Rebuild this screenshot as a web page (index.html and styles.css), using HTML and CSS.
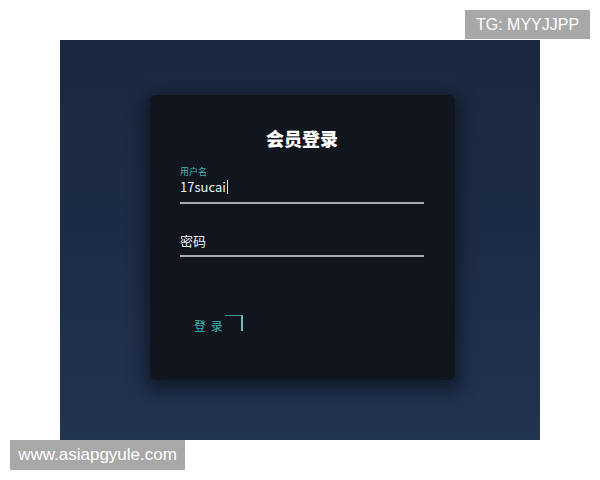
FILE: index.html
```html
<!DOCTYPE html>
<html lang="zh">
<head>
<meta charset="utf-8">
<link rel="stylesheet" href="styles.css">
</head>
<body>
<div class="page">
  <div class="panel">
    <div class="card">
      <h1 class="title">会员登录</h1>
      <div class="field">
        <div class="label">用户名</div>
        <div class="value">17sucai<span class="caret"></span></div>
        <div class="line"></div>
      </div>
      <div class="field field-pw">
        <div class="value">密码</div>
        <div class="line"></div>
      </div>
      <div class="btn-wrap">
        <span class="btn">登 录</span>
        <span class="corner"></span>
      </div>
    </div>
  </div>
</div>
<div class="badge badge-tg">TG: MYYJJPP</div>
<div class="badge badge-url">www.asiapgyule.com</div>
</body>
</html>
```
FILE: styles.css
```css
html, body {
  margin: 0;
  padding: 0;
  background: #ffffff;
  font-family: "Noto Sans CJK SC", "Liberation Sans", sans-serif;
}
.page {
  width: 600px;
  height: 480px;
  padding: 40px 0 0 60px;
  box-sizing: border-box;
}
.panel {
  width: 480px;
  height: 400px;
  background: linear-gradient(180deg, #1b283f 0%, #1d2c46 50%, #213452 100%);
  padding: 55px 0 0 90px;
  box-sizing: border-box;
}
.card {
  width: 305px;
  height: 285px;
  background: #11151d;
  border-radius: 6px;
  box-shadow: 0 6px 16px 6px rgba(8, 12, 20, 0.55);
  padding: 28px 31px 0 30px;
  box-sizing: border-box;
}
.title {
  margin: 0;
  text-align: center;
  color: #ffffff;
  font-size: 18px;
  font-weight: 900;
  line-height: 30px;
}
.field {
  margin-top: 13px;
}
.label {
  color: #46b6b0;
  font-size: 9px;
  line-height: 12px;
}
.value {
  color: #eef0f2;
  font-size: 13px;
  line-height: 18px;
  display: flex;
  align-items: center;
}
.caret {
  display: inline-block;
  width: 1px;
  height: 14px;
  background: #e0e0e0;
  margin-left: 1px;
}
.line {
  margin-top: 6px;
  height: 2px;
  background: #a8abb0;
}
.field-pw {
  margin-top: 28px;
}
.field-pw .line {
  margin-top: 5px;
}
.btn-wrap {
  margin-top: 57px;
  margin-left: 14px;
  display: flex;
  align-items: flex-end;
  height: 20px;
}
.btn {
  color: #3fb2ac;
  font-size: 12px;
  line-height: 16px;
  letter-spacing: 1px;
}
.corner {
  width: 18px;
  height: 16px;
  margin-left: 1px;
  margin-bottom: 3px;
  border-top: 1px solid #4b8f8c;
  border-right: 2px solid #6fc0bb;
  box-sizing: border-box;
}
.badge {
  position: absolute;
  background: #a8a8a8;
  color: #ffffff;
  font-family: "Liberation Sans", sans-serif;
}
.badge-tg {
  left: 465px;
  top: 10px;
  width: 125px;
  height: 29px;
  line-height: 29px;
  font-size: 16px;
  text-align: center;
}
.badge-url {
  left: 10px;
  top: 440px;
  width: 175px;
  height: 30px;
  line-height: 30px;
  font-size: 17px;
  text-align: center;
}
```
